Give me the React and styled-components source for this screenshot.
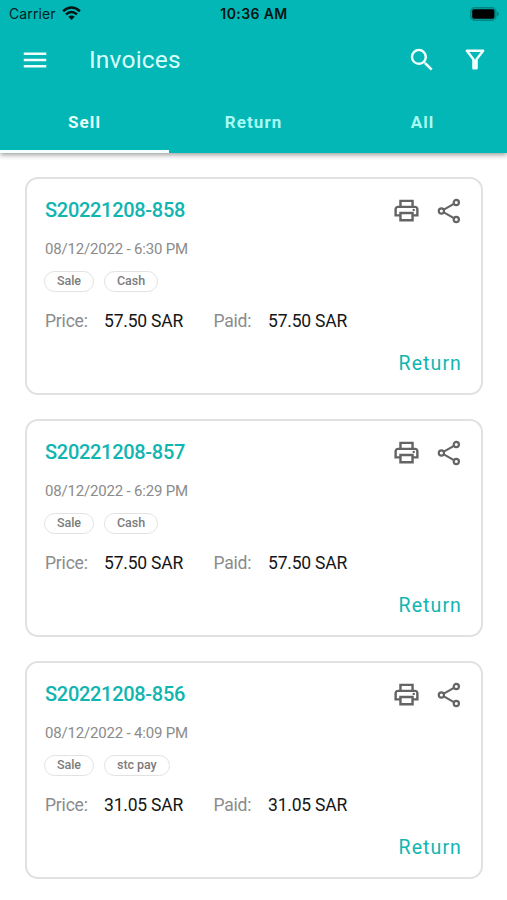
import React from "react";
import styled, { createGlobalStyle } from "styled-components";
import { MdMenu, MdSearch, MdOutlinePrint } from "react-icons/md";

const GlobalStyle = createGlobalStyle`
  * { box-sizing: border-box; }
  body { margin: 0; background: #fff; font-family: Roboto, "Liberation Sans", sans-serif; }
`;

const Screen = styled.div`
  width: 507px;
  height: 900px;
  overflow: hidden;
  background: #fff;
`;

const Header = styled.header`
  height: 152.5px;
  background: #02b7b5;
  box-shadow: 0 2px 5px rgba(0, 0, 0, 0.38);
`;

const StatusBar = styled.div`
  display: grid;
  grid-template-columns: 1fr auto 1fr;
  align-items: center;
  height: 27px;
  padding: 0 8px 0 9px;
  font-family: Inter, sans-serif;
  color: #04201f;
`;

const Carrier = styled.div`
  display: flex;
  align-items: center;
  gap: 6px;
  font-size: 14px;
  letter-spacing: 0.1px;
`;

const Clock = styled.div`
  font-size: 14px;
  font-weight: 600;
  letter-spacing: 0.4px;
  color: #021413;
`;

const BatterySlot = styled.div`
  display: flex;
  justify-content: flex-end;
`;

const Toolbar = styled.div`
  display: flex;
  align-items: center;
  height: 65px;
  padding: 0 20px;
  color: #effffe;
`;

const Heading = styled.h1`
  flex: 1;
  margin: 0 0 0 39px;
  font-size: 24.5px;
  line-height: 28px;
  font-weight: 400;
  letter-spacing: 0.2px;
  color: #d9fffb;
`;

const ToolbarActions = styled.div`
  display: flex;
  align-items: center;
  gap: 28px;
  margin-right: 2px;
`;

const Tabs = styled.nav`
  display: grid;
  grid-template-columns: repeat(3, 1fr);
  height: 60.5px;
`;

const Tab = styled.button`
  border: 0;
  border-bottom: 3px solid ${({ $active }) => ($active ? "#f4fffe" : "transparent")};
  background: none;
  padding: 3px 0 0;
  font: 700 17px/20px Roboto, sans-serif;
  letter-spacing: 1.1px;
  color: ${({ $active }) => ($active ? "#e9fffd" : "#a6fbf4")};
`;

const List = styled.main`
  display: flex;
  flex-direction: column;
  gap: 24px;
  padding: 24px 24px 0 25px;
`;

const Card = styled.article`
  display: flex;
  flex-direction: column;
  height: 218px;
  padding: 18px 19px 0 18px;
  border: 2px solid #e1e1e1;
  border-radius: 13px;
  background: #fff;
`;

const CardTop = styled.div`
  display: flex;
  align-items: center;
  justify-content: space-between;
  height: 28px;
`;

const Number = styled.h2`
  margin: 0 0 2px;
  font-size: 20px;
  line-height: 24px;
  font-weight: 500;
  letter-spacing: -0.3px;
  color: #10b4b0;
`;

const CardActions = styled.div`
  display: flex;
  align-items: center;
  gap: 15.5px;
  margin-right: 1.5px;
  color: #646464;
`;

const DateLine = styled.div`
  margin-top: 14px;
  font-size: 15px;
  line-height: 20px;
  letter-spacing: -0.18px;
  color: #8b8b8b;
`;

const Chips = styled.div`
  display: flex;
  gap: 10px;
  margin: 12px 0 0 -1px;
`;

const Chip = styled.span`
  height: 21px;
  padding: 0 12px;
  border: 1px solid #e2e2e2;
  border-radius: 11px;
  font-size: 12.5px;
  line-height: 18px;
  font-weight: 500;
  letter-spacing: -0.05px;
  color: #7c7c7c;
`;

const Amounts = styled.dl`
  display: grid;
  grid-template-columns: 59px 109.5px 54.5px auto;
  margin: 18px 0 0;
  font-size: 17.5px;
  line-height: 22px;
  letter-spacing: -0.2px;
`;

const Label = styled.dt`
  color: #8b8b8b;
`;

const Value = styled.dd`
  margin: 0;
  white-space: nowrap;
  color: #161616;
`;

const ReturnButton = styled.button`
  align-self: flex-end;
  margin-top: 20px;
  padding: 0;
  border: 0;
  background: none;
  font: 400 19.5px/24px Roboto, sans-serif;
  letter-spacing: 1.1px;
  color: #12b5b1;
`;

const WifiIcon = () => (
  <svg width="19" height="15" viewBox="0 0 19 15" fill="none" stroke="#021413" strokeWidth="2.5">
    <path d="M1.1 5.2Q9.5-2.1 17.9 5.2" />
    <path d="M4 8.4Q9.5 3.7 15 8.4" />
    <path d="M6.3 10.8Q9.5 8.2 12.7 10.8L9.5 14Z" fill="#021413" stroke="none" />
  </svg>
);

const BatteryIcon = () => (
  <svg width="29" height="14" viewBox="0 0 29 14">
    <rect x="0.7" y="0.7" width="25.2" height="12.6" rx="4" fill="#02a09e" stroke="#048583" strokeWidth="1.3" />
    <rect x="2.2" y="2.3" width="22.2" height="9.4" rx="1.8" fill="#000" />
    <path d="M27 4.8Q28.8 5.5 28.8 7T27 9.2Z" fill="#047d7b" />
  </svg>
);

const FilterIcon = () => (
  <svg width="20" height="21" viewBox="0 0 20 21" fill="none" stroke="currentColor" strokeWidth="2.4">
    <path d="M1.8 1.7H18.2L11.6 10.3V19.2H8.4V10.3Z" strokeLinejoin="round" />
    <path d="M10 10.5V20" strokeWidth="4" />
  </svg>
);

const ShareIcon = () => (
  <svg width="24" height="26" viewBox="0 0 24 26" fill="none" stroke="currentColor" strokeWidth="2.2">
    <circle cx="4.4" cy="13" r="2.6" />
    <circle cx="19.3" cy="4.5" r="2.6" />
    <circle cx="19.3" cy="21.5" r="2.6" />
    <path d="M6.8 11.6L16.9 5.9M6.8 14.4L16.9 20.1" />
  </svg>
);

const invoices = [
  { number: "S20221208-858", date: "08/12/2022 - 6:30 PM", method: "Cash", amount: "57.50 SAR" },
  { number: "S20221208-857", date: "08/12/2022 - 6:29 PM", method: "Cash", amount: "57.50 SAR" },
  { number: "S20221208-856", date: "08/12/2022 - 4:09 PM", method: "stc pay", amount: "31.05 SAR" },
];

const Invoice = ({ number, date, method, amount }) => (
  <Card>
    <CardTop>
      <Number>{number}</Number>
      <CardActions>
        <MdOutlinePrint size={29} />
        <ShareIcon />
      </CardActions>
    </CardTop>
    <DateLine>{date}</DateLine>
    <Chips>
      <Chip>Sale</Chip>
      <Chip>{method}</Chip>
    </Chips>
    <Amounts>
      <Label>Price:</Label>
      <Value>{amount}</Value>
      <Label>Paid:</Label>
      <Value>{amount}</Value>
    </Amounts>
    <ReturnButton>Return</ReturnButton>
  </Card>
);

export default function App() {
  return (
    <Screen>
      <GlobalStyle />
      <Header>
        <StatusBar>
          <Carrier>
            Carrier
            <WifiIcon />
          </Carrier>
          <Clock>10:36 AM</Clock>
          <BatterySlot>
            <BatteryIcon />
          </BatterySlot>
        </StatusBar>
        <Toolbar>
          <MdMenu size={30} />
          <Heading>Invoices</Heading>
          <ToolbarActions>
            <MdSearch size={30} />
            <FilterIcon />
          </ToolbarActions>
        </Toolbar>
        <Tabs>
          <Tab $active>Sell</Tab>
          <Tab>Return</Tab>
          <Tab>All</Tab>
        </Tabs>
      </Header>
      <List>
        {invoices.map((invoice) => (
          <Invoice key={invoice.number} {...invoice} />
        ))}
      </List>
    </Screen>
  );
}
